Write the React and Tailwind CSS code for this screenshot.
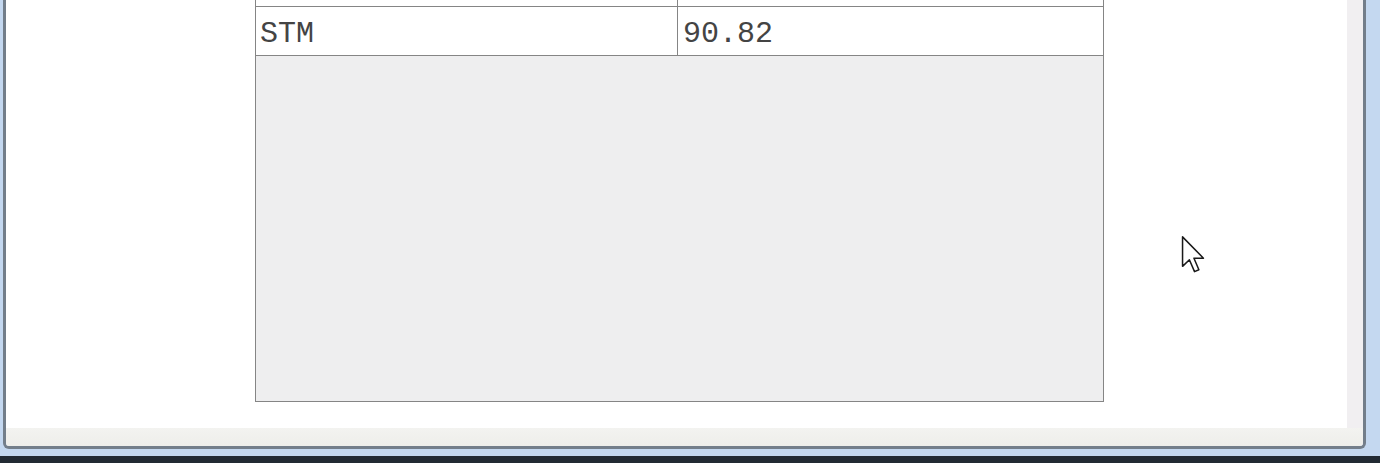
import React from 'react';

// Scrolled view of a result table inside a desktop window
const rows = [{ name: 'STM', value: '90.82' }];

const Cursor = () => (
  <svg
    className="absolute left-[1180px] top-[235px]"
    width="26"
    height="38"
    viewBox="0 0 13 20"
  >
    <path
      d="M1 1 L1 16.5 L4.6 13 L7.3 19.3 L9.6 18.3 L7 12.2 L12 12.2 Z"
      fill="#ffffff"
      stroke="#1a1a1a"
      strokeWidth="0.8"
      strokeLinejoin="round"
    />
  </svg>
);

const App = () => {
  return (
    <div className="relative w-[1380px] h-[463px] overflow-hidden flex flex-col bg-[#c4d8f0] font-['Liberation_Mono',monospace]">
      {/* window body */}
      <div className="flex-1 pl-[3px] pr-[14px] pb-[7px] flex flex-col">
        <div className="flex-1 flex flex-col border-l-[3px] border-r-[3px] border-b-[3px] border-[#737e8a] rounded-b-[6px] overflow-hidden">
          <div className="flex-1 flex">
            {/* content panel */}
            <div className="flex-1 bg-white pl-[249px]">
              <div className="w-[849px] flex flex-col">
                {/* tail of the row above */}
                <div className="h-[6px] flex border-l border-r border-[#858585] bg-white">
                  <div className="w-[422px] border-r border-[#858585]" />
                  <div className="flex-1" />
                </div>
                {rows.map((r) => (
                  <div
                    key={r.name}
                    className="h-[50px] flex border border-[#858585] bg-white text-[30px] leading-[34px] text-[#444444]"
                  >
                    <div className="w-[422px] border-r border-[#858585] pl-[4px] pt-[10px]">
                      {r.name}
                    </div>
                    <div className="flex-1 pl-[5px] pt-[10px]">{r.value}</div>
                  </div>
                ))}
                {/* empty viewport */}
                <div className="h-[346px] bg-[#eeeeef] border-l border-r border-b border-[#858585]" />
              </div>
            </div>
            <div className="w-[16px] bg-[#f1eff1]" />
          </div>
          <div className="h-[18px] bg-gradient-to-b from-[#f3f3f0] to-[#eeeeea]" />
        </div>
      </div>
      <div className="h-[7px] bg-[#222a33]" />
      <Cursor />
    </div>
  );
};

export default App;
